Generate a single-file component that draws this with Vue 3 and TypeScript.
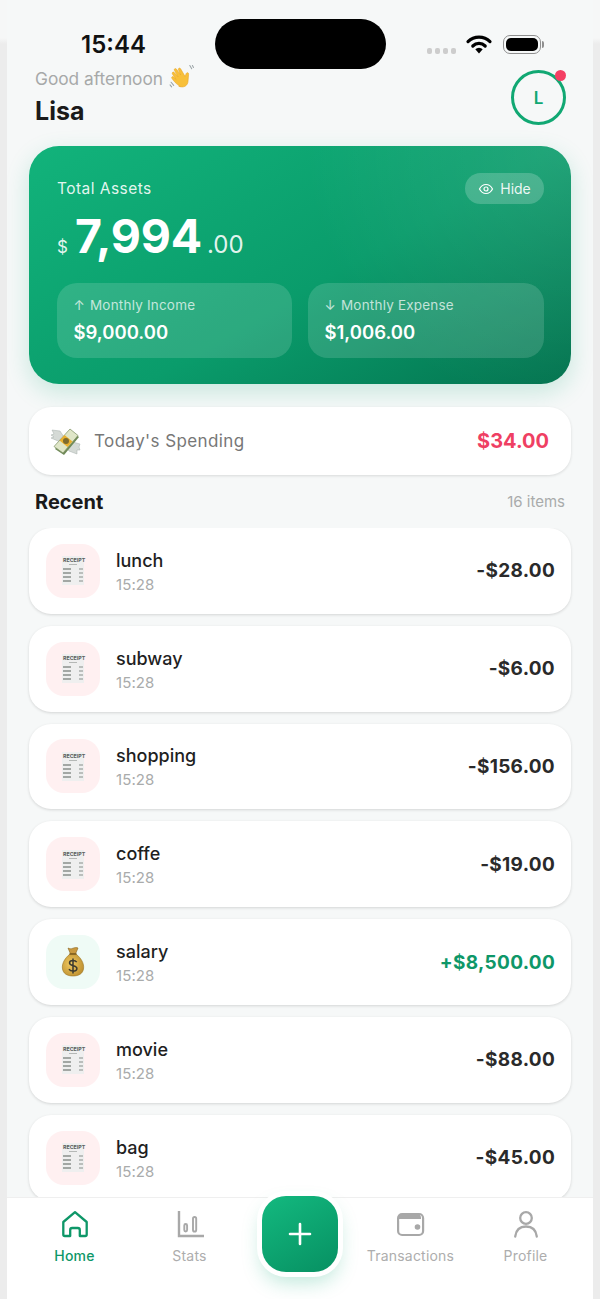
<script setup lang="ts">
interface Item {
  name: string
  amount: string
  income?: boolean
}

const items: Item[] = [
  { name: 'lunch', amount: '-$28.00' },
  { name: 'subway', amount: '-$6.00' },
  { name: 'shopping', amount: '-$156.00' },
  { name: 'coffe', amount: '-$19.00' },
  { name: 'salary', amount: '+$8,500.00', income: true },
  { name: 'movie', amount: '-$88.00' },
  { name: 'bag', amount: '-$45.00' }
]
</script>

<template>
  <div class="page">
    <div class="screen">
      <div class="statusbar">
        <span class="time">15:44</span>
        <div class="island"></div>
        <div class="status-icons">
          <div class="dots"><i></i><i></i><i></i><i></i></div>
          <svg width="28" height="20" viewBox="0 0 28 20">
            <path d="M3 7.600a15.600 15.600 0 0 1 22 0" fill="none" stroke="#000" stroke-width="3.200" stroke-linecap="round" />
            <path d="M7.800 12a8.800 8.800 0 0 1 12.400 0" fill="none" stroke="#000" stroke-width="3.200" stroke-linecap="round" />
            <path d="M14 19.500l-3.700-4.200a5.200 5.200 0 0 1 7.400 0z" fill="#000" />
          </svg>
          <div class="battery"><div class="battery-fill"></div></div>
          <div class="battery-cap"></div>
        </div>
      </div>

      <header class="greeting">
        <div>
          <div class="hello">
            Good afternoon
            <svg class="wave" width="25" height="25" viewBox="0 0 24 24">
              <g transform="rotate(-22 12 12)">
                <path d="M7.500 20.500C4.500 17 3.400 13 2.800 10.200c-.3-1.400 1.500-1.900 2-.5l1.300 3L4.800 6.500c-.3-1.500 1.700-2 2.200-.6l1.800 5.100-.9-7c-.2-1.500 1.900-1.800 2.300-.3l1.600 6.600-.1-5.400c0-1.500 2.100-1.600 2.300-.1l1.200 8.600 2-2.300c1.100-1.200 2.800.1 1.900 1.500l-2.800 5.600c-1.800 4.300-6.700 5.200-10.300 1.300z" fill="#f8c03a" stroke="#e8a526" stroke-width=".5" />
              </g>
              <path d="M2 17.500l2.500 3M1 20l1.500 2M20 1.500l1.800 3M22.500 1.500l1 1.800" stroke="#9aa3a6" stroke-width="1" fill="none" stroke-linecap="round" />
            </svg>
          </div>
          <div class="user">Lisa</div>
        </div>
        <div class="avatar">
          L
          <span class="avatar-dot"></span>
        </div>
      </header>

      <section class="assets">
        <div class="assets-top">
          <span class="assets-label">Total Assets</span>
          <button class="hide">
            <svg width="16" height="16" viewBox="0 0 16 16" fill="none" stroke="#fff" stroke-width="1.200">
              <path d="M1.500 8C3 5 5.300 3.500 8 3.500S13 5 14.500 8C13 11 10.700 12.500 8 12.500S3 11 1.500 8z" />
              <circle cx="8" cy="8" r="2" />
            </svg>
            Hide
          </button>
        </div>
        <div class="balance">
          <span class="currency">$</span>
          <span class="whole">7,994</span>
          <span class="cents">.00</span>
        </div>
        <div class="monthly">
          <div class="month-card">
            <div class="month-label"><span class="arrow">↑</span> Monthly Income</div>
            <div class="month-value">$9,000.00</div>
          </div>
          <div class="month-card">
            <div class="month-label"><span class="arrow">↓</span> Monthly Expense</div>
            <div class="month-value">$1,006.00</div>
          </div>
        </div>
      </section>

      <section class="today">
        <div class="today-left">
          <svg width="30" height="30" viewBox="0 0 30 30">
            <path d="M1 4l8 1 4 6-6 4-7-3 3-1-3-2 3-1z" fill="#d5dad6" stroke="#a5aeaa" stroke-width=".5" />
            <path d="M18 15l11 3-1 3 1 3-3 0 0 4-8-3-4-5z" fill="#d5dad6" stroke="#a5aeaa" stroke-width=".5" />
            <path d="M4 23L20 5l8 6-15 18z" fill="#6f8a58" />
            <path d="M3 20.500L19 3l8 6.500-15 17.500z" fill="#dfe6c8" stroke="#7b8e60" stroke-width=".7" />
            <path d="M8.500 14.500l5-5.500 8 6.500-5 5.500z" fill="#e8b030" />
            <circle cx="15" cy="15" r="3" fill="#7c6a2e" />
          </svg>
          <span>Today's Spending</span>
        </div>
        <span class="today-amount">$34.00</span>
      </section>

      <div class="recent-head">
        <span class="recent-title">Recent</span>
        <span class="recent-count">16 items</span>
      </div>

      <div class="list">
        <div v-for="item in items" :key="item.name" class="row">
          <div class="row-icon" :class="{ green: item.income }">
            <svg v-if="item.income" width="30" height="32" viewBox="0 0 30 32">
              <defs>
                <radialGradient id="bag" cx="40%" cy="45%" r="70%">
                  <stop offset="0%" stop-color="#f0ca62" />
                  <stop offset="100%" stop-color="#b98a2a" />
                </radialGradient>
              </defs>
              <path d="M10 2c2 1 3 1 5 .2s3.500-.7 5-.2l-2.500 6h-5z" fill="#c9993f" stroke="#8a6320" stroke-width=".6" />
              <path d="M12 8h6c5 4 8.500 9.500 7.500 15-.8 4.500-4.500 7-10.500 7s-9.700-2.500-10.500-7C3.500 17.500 7 12 12 8z" fill="url(#bag)" stroke="#9b7423" stroke-width=".6" />
              <path d="M11.500 8h7" stroke="#7a5a1c" stroke-width="1.400" />
              <path d="M18.700 16.200c-.8-1.200-2-1.700-3.700-1.700-2 0-3.500 1-3.500 2.500 0 3.600 7.400 1.800 7.400 5.400 0 1.600-1.700 2.700-3.900 2.700-1.800 0-3.200-.6-4-2M15 12.500v15" fill="none" stroke="#3b3a30" stroke-width="1.500" />
            </svg>
            <div v-else class="receipt">
              <div class="receipt-head">RECEIPT</div>
              <div class="receipt-sub"></div>
              <div class="receipt-line"><i></i><b></b></div>
              <div class="receipt-line"><i></i><b></b></div>
              <div class="receipt-line"><i></i><b></b></div>
              <div class="receipt-line"><i></i><b></b></div>
            </div>
          </div>
          <div class="row-text">
            <div class="row-name">{{ item.name }}</div>
            <div class="row-time">15:28</div>
          </div>
          <div class="row-amount" :class="{ income: item.income }">{{ item.amount }}</div>
        </div>
      </div>

      <nav class="tabbar">
        <div class="tab active">
          <svg width="30" height="30" viewBox="0 0 30 30" fill="none" stroke="#0e9768" stroke-width="2.300" stroke-linejoin="round">
            <path d="M3.300 12L15 2.200 26.700 12v12.500a1.500 1.500 0 0 1-1.500 1.500h-5.400v-6a2 2 0 0 0-2-2h-5.600a2 2 0 0 0-2 2v6H4.800a1.500 1.500 0 0 1-1.500-1.500z" />
          </svg>
          <span>Home</span>
        </div>
        <div class="tab">
          <svg width="30" height="30" viewBox="0 0 30 30" fill="none" stroke="#a8a8a8">
            <path d="M4 1v25h25" stroke-width="2.400" />
            <rect x="9.300" y="14" width="2.800" height="7.500" rx="1.400" stroke-width="1.900" />
            <rect x="18" y="7" width="3.200" height="14.500" rx="1.600" stroke-width="1.900" />
          </svg>
          <span>Stats</span>
        </div>
        <div class="fab-slot">
          <button class="fab">
            <svg width="24" height="24" viewBox="0 0 24 24" stroke="#fff" stroke-width="2.600" stroke-linecap="round">
              <path d="M12 2v20M2 12h20" />
            </svg>
          </button>
        </div>
        <div class="tab">
          <svg width="30" height="30" viewBox="0 0 30 30" fill="none">
            <path d="M2 8a4 4 0 0 1 4-4h15a4 4 0 0 1 4 4v2H2z" fill="#a8a8a8" />
            <rect x="2.100" y="4" width="25" height="21" rx="4" stroke="#a8a8a8" stroke-width="2.200" />
            <rect x="3.200" y="9" width="22.800" height="1.600" fill="#fff" />
            <circle cx="21.500" cy="17" r="2.800" fill="#a8a8a8" />
          </svg>
          <span>Transactions</span>
        </div>
        <div class="tab">
          <svg width="30" height="30" viewBox="0 0 30 30" fill="none" stroke="#a8a8a8" stroke-width="2.300" stroke-linecap="round">
            <circle cx="15" cy="8" r="5.800" />
            <path d="M4.200 26.500C5 20 9 16.500 15 16.500S25 20 25.800 26.500" />
          </svg>
          <span>Profile</span>
        </div>
      </nav>
    </div>
  </div>
</template>

<style>
html,
body {
  margin: 0;
  background: #ececec;
}
</style>

<style scoped>
.page {
  width: 600px;
  height: 1299px;
  background: linear-gradient(#f6f7f7 0, #f6f7f7 38px, #ececec 44px);
  overflow: hidden;
  font-family: Inter, "Liberation Sans", sans-serif;
}

.screen {
  position: relative;
  width: 586px;
  height: 1299px;
  margin: 0 7px;
  background: #f6f8f8;
  display: flex;
  flex-direction: column;
  overflow: hidden;
}

.statusbar {
  height: 68px;
  flex-shrink: 0;
  display: flex;
  justify-content: space-between;
  align-items: flex-start;
  position: relative;
}

.time {
  margin: 30px 0 0 74px;
  font-size: 24px;
  line-height: 30px;
  font-weight: 600;
  color: #111;
}

.island {
  position: absolute;
  left: 208px;
  top: 19px;
  width: 171px;
  height: 50px;
  background: #000;
  border-radius: 25px;
}

.status-icons {
  display: flex;
  align-items: center;
  margin: 34px 49px 0 0;
}

.dots {
  display: flex;
  gap: 3px;
  margin-right: 9px;
  margin-top: 13px;
}

.dots i {
  width: 5px;
  height: 6px;
  border-radius: 2px;
  background: #cdcdcd;
}

.battery {
  width: 38px;
  height: 19px;
  margin-left: 10px;
  box-sizing: border-box;
  padding: 2px;
  border: 1.500px solid #8f8f8f;
  border-radius: 7px;
}

.battery-fill {
  width: 100%;
  height: 100%;
  background: #000;
  border-radius: 5px;
}

.battery-cap {
  width: 2px;
  height: 7px;
  margin-left: 1px;
  background: #8f8f8f;
  border-radius: 0 2px 2px 0;
}

.greeting {
  flex-shrink: 0;
  height: 78px;
  padding: 0 27px 0 28px;
  display: flex;
  justify-content: space-between;
  align-items: flex-start;
}

.hello {
  display: flex;
  align-items: center;
  gap: 6px;
  font-size: 17.300px;
  line-height: 20px;
  color: #a7a9a9;
}

.wave {
  margin-top: -4px;
}

.user {
  margin-top: 6px;
  font-size: 25px;
  line-height: 32px;
  font-weight: 700;
  color: #1a1a1a;
}

.avatar {
  position: relative;
  width: 49px;
  height: 49px;
  margin-top: 2px;
  border: 3px solid #11a873;
  border-radius: 50%;
  display: flex;
  align-items: center;
  justify-content: center;
  font-size: 17px;
  font-weight: 600;
  color: #11a873;
}

.avatar-dot {
  position: absolute;
  right: -3px;
  top: -3px;
  width: 11px;
  height: 11px;
  border-radius: 50%;
  background: #f43f63;
}

.assets {
  flex-shrink: 0;
  margin: 0 22px;
  height: 238px;
  box-sizing: border-box;
  padding: 27px 27px 26px 28px;
  border-radius: 30px;
  color: #fff;
  background:
    radial-gradient(circle at 100% 0%, rgba(255, 255, 255, 0.1), rgba(255, 255, 255, 0) 45%),
    linear-gradient(150deg, #12b37b 0%, #0a9c6b 55%, #03734f 100%);
  box-shadow: 0 8px 24px rgba(16, 170, 120, 0.2);
  display: flex;
  flex-direction: column;
}

.assets-top {
  display: flex;
  justify-content: space-between;
  align-items: center;
}

.assets-label {
  font-size: 15.500px;
  letter-spacing: 0.45px;
  color: rgba(255, 255, 255, 0.9);
}

.hide {
  width: 79px;
  height: 31px;
  border: none;
  border-radius: 16px;
  background: rgba(255, 255, 255, 0.2);
  color: rgba(255, 255, 255, 0.92);
  font-family: inherit;
  font-size: 14px;
  display: flex;
  align-items: center;
  justify-content: center;
  gap: 6px;
  padding: 0;
}

.balance {
  margin-top: 9px;
  height: 47px;
  display: flex;
  align-items: baseline;
  line-height: 47px;
}

.currency {
  font-size: 17px;
  margin-right: 7px;
  color: rgba(255, 255, 255, 0.9);
}

.whole {
  font-size: 46.500px;
  font-weight: 700;
  letter-spacing: -0.2px;
}

.cents {
  font-size: 24px;
  margin-left: 5px;
  color: rgba(255, 255, 255, 0.9);
}

.monthly {
  margin-top: auto;
  display: grid;
  grid-template-columns: 235px 236px;
  gap: 16px;
}

.month-card {
  height: 75px;
  box-sizing: border-box;
  padding: 14px 16.500px;
  border-radius: 20px;
  background: rgba(255, 255, 255, 0.14);
}

.month-label {
  font-size: 13.500px;
  line-height: 17px;
  letter-spacing: 0.2px;
  color: rgba(255, 255, 255, 0.72);
}

.arrow {
  margin-right: 1px;
}

.month-value {
  margin-top: 6px;
  font-size: 18.500px;
  line-height: 24px;
  font-weight: 600;
}

.today {
  flex-shrink: 0;
  margin: 23px 22px 0;
  height: 68px;
  padding: 0 22px;
  box-sizing: border-box;
  background: #fff;
  border-radius: 22px;
  box-shadow: 0 1px 3px rgba(0, 0, 0, 0.12);
  display: flex;
  justify-content: space-between;
  align-items: center;
}

.today-left {
  display: flex;
  align-items: center;
  gap: 13px;
  font-size: 17px;
  letter-spacing: 0.4px;
  color: #777;
}

.today-amount {
  font-size: 20px;
  font-weight: 700;
  color: #ef3f63;
}

.recent-head {
  flex-shrink: 0;
  height: 53px;
  padding: 0 28px;
  display: flex;
  justify-content: space-between;
  align-items: center;
}

.recent-title {
  font-size: 20px;
  font-weight: 700;
  color: #1a1a1a;
}

.recent-count {
  font-size: 15px;
  color: #a9abab;
}

.list {
  flex: 1;
  min-height: 0;
  overflow: hidden;
  padding: 0 22px;
  display: flex;
  flex-direction: column;
  gap: 12px;
}

.row {
  flex-shrink: 0;
  height: 85.800px;
  box-sizing: border-box;
  padding: 0 16px 0 17px;
  background: #fff;
  border-radius: 22px;
  box-shadow: 0 1px 3px rgba(0, 0, 0, 0.14);
  display: flex;
  align-items: center;
}

.row-icon {
  width: 54px;
  height: 54px;
  border-radius: 18px;
  background: #fff0f1;
  display: flex;
  align-items: center;
  justify-content: center;
  flex-shrink: 0;
}

.row-icon.green {
  background: #effbf6;
}

.receipt {
  width: 22px;
  height: 29px;
  box-sizing: border-box;
  padding: 2px 1px;
  background: #efefef;
  display: flex;
  flex-direction: column;
  gap: 1px;
}

.receipt-head {
  font-size: 5.300px;
  line-height: 5px;
  font-weight: 700;
  text-align: center;
  color: #5c605e;
  white-space: nowrap;
}

.receipt-sub {
  height: 1px;
  width: 8px;
  margin: 0 auto 2px;
  background: #b5b8b6;
}

.receipt-line {
  display: flex;
  justify-content: space-between;
  height: 2px;
  margin-bottom: 1px;
}

.receipt-line i {
  width: 8px;
  background: #a3a7a4;
}

.receipt-line b {
  width: 4px;
  background: #bbbebc;
}

.row-text {
  margin-left: 16px;
  padding-top: 2px;
  flex: 1;
}

.row-name {
  font-size: 18px;
  line-height: 24px;
  font-weight: 500;
  color: #1f1f1f;
}

.row-time {
  margin-top: 2px;
  font-size: 15px;
  line-height: 20px;
  letter-spacing: 0.1px;
  color: #a9abab;
}

.row-amount {
  font-size: 19px;
  font-weight: 700;
  letter-spacing: 0.3px;
  color: #2a2a2a;
}

.row-amount.income {
  color: #0e9768;
}

.tabbar {
  position: absolute;
  left: 0;
  right: 0;
  bottom: 0;
  height: 102px;
  box-sizing: border-box;
  padding: 0 10px;
  background: #fff;
  border-top: 1px solid #efefef;
  display: grid;
  grid-template-columns: 115px 115px 106px 115px 115px;
}

.tab {
  padding-top: 12px;
  display: flex;
  flex-direction: column;
  align-items: center;
  gap: 7px;
  font-size: 14px;
  line-height: 17px;
  letter-spacing: 0.2px;
  color: #adadad;
}

.tab.active {
  color: #0e9768;
  font-weight: 500;
}

.fab-slot {
  display: flex;
  justify-content: center;
}

.fab {
  width: 76px;
  height: 76px;
  margin-top: -2px;
  border: none;
  border-radius: 24px;
  padding: 0;
  background: linear-gradient(150deg, #13b97f, #079062);
  box-shadow: 0 0 0 5px #fff, 0 10px 20px rgba(16, 170, 120, 0.28);
  display: flex;
  align-items: center;
  justify-content: center;
}
</style>
